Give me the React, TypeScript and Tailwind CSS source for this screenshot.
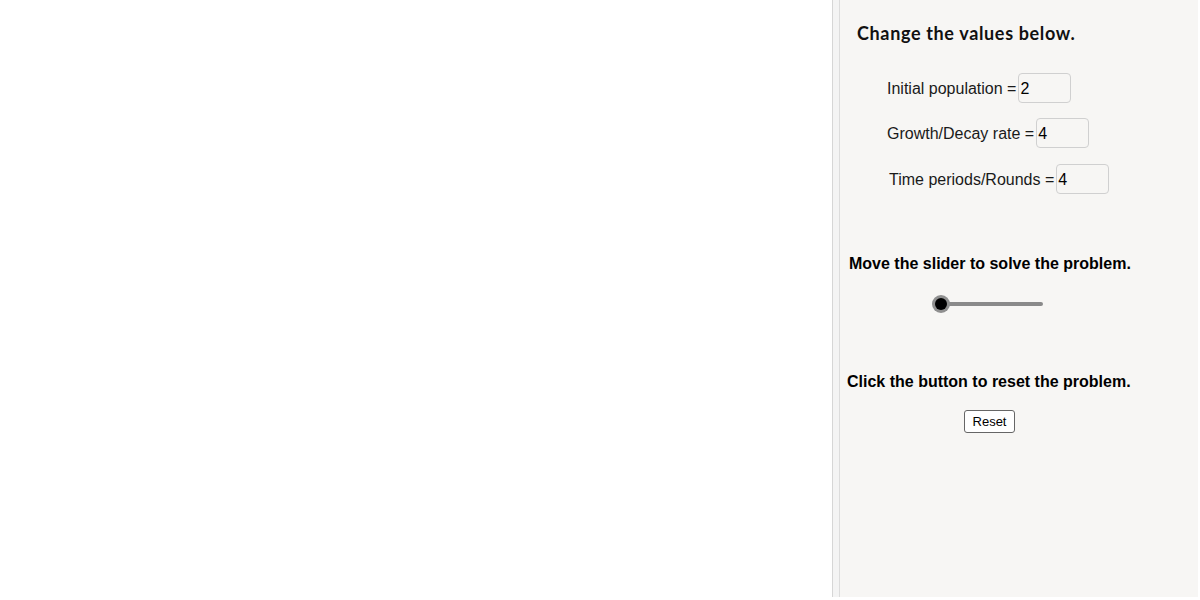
import React from "react";

function Field({ label, value, ml }: { label: string; value: string; ml: string }) {
  return (
    <div className={`flex items-center h-[30px] ${ml}`}>
      <span className="text-[16px] leading-[20px] text-[#1a1a1a] whitespace-nowrap translate-y-[1px]">{label}</span>
      <div className="ml-[2px] w-[53px] h-[30px] rounded-[4px] border border-[#d0d0d0] bg-[#f7f6f4] flex items-center pl-[1px] text-[16px] text-black">
        <span className="translate-y-[1px]">{value}</span>
      </div>
    </div>
  );
}

export default function App() {
  return (
    <div className="w-[1200px] h-[600px] flex bg-white overflow-hidden" style={{ fontFamily: '"Liberation Sans", Arial, sans-serif' }}>
      <div className="w-[832px] h-[597px] bg-white shrink-0" />
      <div className="w-[1px] h-[597px] bg-[#d6d6d6] shrink-0" />
      <div className="w-[6px] h-[597px] bg-[#f4f4f4] shrink-0" />
      <div className="w-[1px] h-[597px] bg-[#dcdcdc] shrink-0" />
      <div className="w-[358px] h-[597px] bg-[#f7f6f4] shrink-0 flex flex-col">
        <div className="mt-[21px] ml-[17px] h-[24px] leading-[24px] text-[18px] font-bold text-[#111] tracking-[0.65px]" style={{ fontFamily: 'Lato, "Open Sans", sans-serif' }}>
          Change the values below.
        </div>
        <div className="mt-[28px]">
          <Field label="Initial population =" value="2" ml="ml-[47px]" />
        </div>
        <div className="mt-[15px]">
          <Field label="Growth/Decay rate =" value="4" ml="ml-[47px]" />
        </div>
        <div className="mt-[16px]">
          <Field label="Time periods/Rounds =" value="4" ml="ml-[49px]" />
        </div>
        <div className="mt-[60px] ml-[9px] h-[20px] leading-[20px] text-[16px] font-bold text-black whitespace-nowrap">
          Move the slider to solve the problem.
        </div>
        <div className="mt-[21px] ml-[92px] h-[18px] relative w-[112px]">
          <div className="absolute left-[9px] top-[7px] w-[102px] h-[4px] rounded-full bg-[#8a8a8a]" />
          <div className="absolute left-0 top-0 w-[18px] h-[18px] rounded-full bg-[#8f8f8f] flex items-center justify-center">
            <div className="w-[12px] h-[12px] rounded-full bg-black" />
          </div>
        </div>
        <div className="mt-[59px] ml-[7px] h-[20px] leading-[20px] text-[16px] font-bold text-black whitespace-nowrap">
          Click the button to reset the problem.
        </div>
        <div className="mt-[17px] ml-[124px]">
          <button className="w-[51px] h-[23px] rounded-[3px] border border-[#666] bg-white text-[13px] leading-[21px] text-black">
            Reset
          </button>
        </div>
      </div>
    </div>
  );
}
